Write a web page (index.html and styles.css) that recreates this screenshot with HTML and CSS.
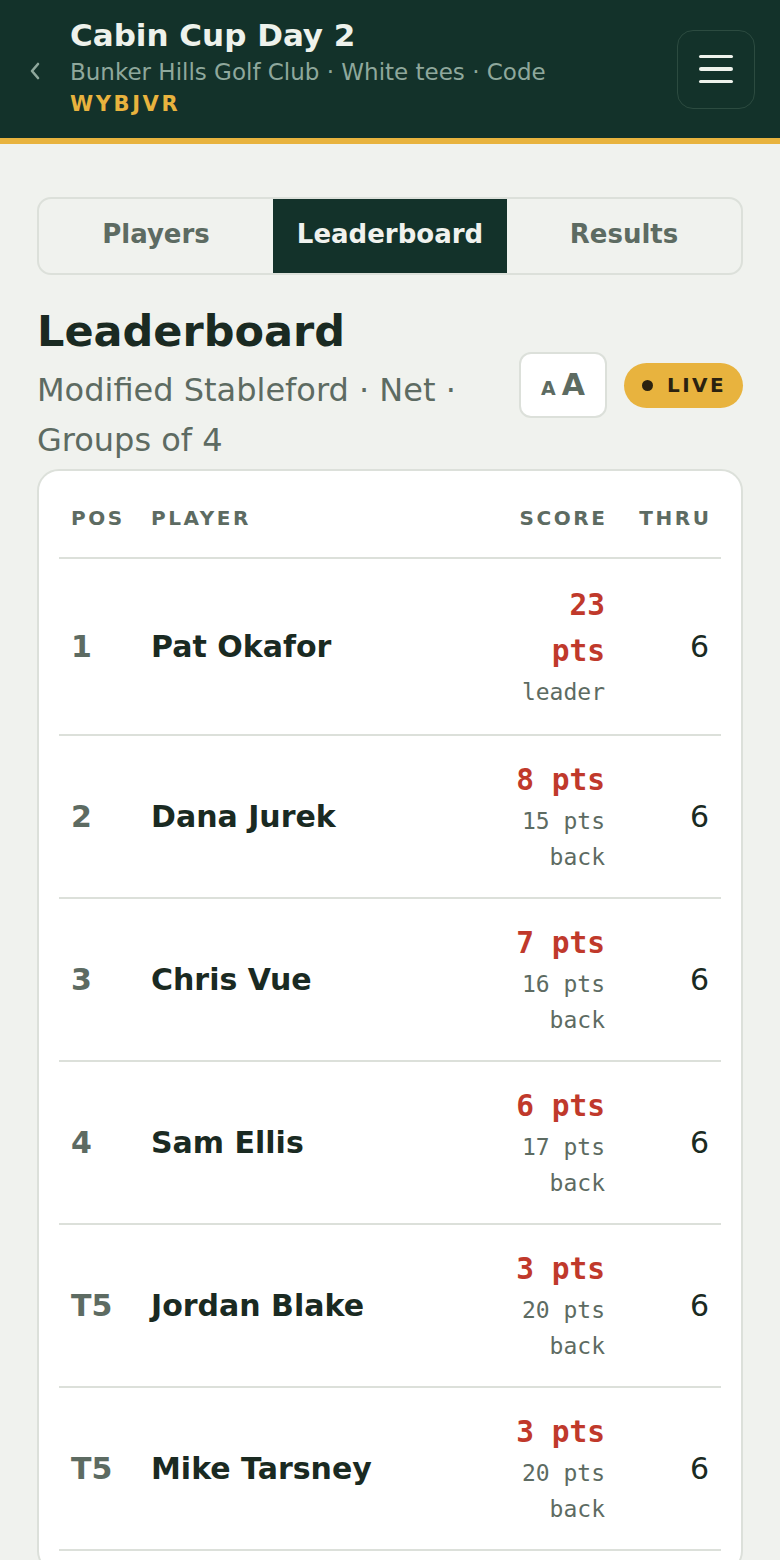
FILE: index.html
```html
<!DOCTYPE html>
<html lang="en">
<head>
<meta charset="utf-8">
<title>Cabin Cup Day 2 – Leaderboard</title>
<link rel="stylesheet" href="styles.css">
</head>
<body>
<header class="topbar">
  <button class="back" aria-label="Back">
    <svg width="14" height="20" viewBox="0 0 14 20"><path d="M10 3 L4 10 L10 17" fill="none" stroke="#8fa89c" stroke-width="2.6" stroke-linecap="round" stroke-linejoin="round"/></svg>
  </button>
  <div class="event">
    <div class="event-title">Cabin Cup Day 2</div>
    <div class="event-meta">Bunker Hills Golf Club · White tees · Code</div>
    <div class="event-code">WYBJVR</div>
  </div>
  <button class="menu" aria-label="Menu">
    <span class="bar"></span><span class="bar"></span><span class="bar"></span>
  </button>
</header>

<main class="main">
  <nav class="tabs">
    <div class="tab">Players</div>
    <div class="tab active">Leaderboard</div>
    <div class="tab">Results</div>
  </nav>

  <section class="section-head">
    <div class="section-text">
      <h1 class="section-title">Leaderboard</h1>
      <p class="section-sub">Modified Stableford · Net · Groups of 4</p>
    </div>
    <div class="controls">
      <button class="textsize"><span class="a-small">A</span><span class="a-big">A</span></button>
      <span class="live"><span class="dot"></span>LIVE</span>
    </div>
  </section>

  <div class="card">
    <div class="row head">
      <div class="cell pos">POS</div>
      <div class="cell player">PLAYER</div>
      <div class="cell score">SCORE</div>
      <div class="cell thru">THRU</div>
    </div>
    <div class="row first">
      <div class="cell pos">1</div>
      <div class="cell player">Pat Okafor</div>
      <div class="cell score"><div class="pts">23 pts</div><div class="back-by">leader</div></div>
      <div class="cell thru">6</div>
    </div>
    <div class="row">
      <div class="cell pos">2</div>
      <div class="cell player">Dana Jurek</div>
      <div class="cell score"><div class="pts">8 pts</div><div class="back-by">15 pts back</div></div>
      <div class="cell thru">6</div>
    </div>
    <div class="row">
      <div class="cell pos">3</div>
      <div class="cell player">Chris Vue</div>
      <div class="cell score"><div class="pts">7 pts</div><div class="back-by">16 pts back</div></div>
      <div class="cell thru">6</div>
    </div>
    <div class="row">
      <div class="cell pos">4</div>
      <div class="cell player">Sam Ellis</div>
      <div class="cell score"><div class="pts">6 pts</div><div class="back-by">17 pts back</div></div>
      <div class="cell thru">6</div>
    </div>
    <div class="row">
      <div class="cell pos">T5</div>
      <div class="cell player">Jordan Blake</div>
      <div class="cell score"><div class="pts">3 pts</div><div class="back-by">20 pts back</div></div>
      <div class="cell thru">6</div>
    </div>
    <div class="row">
      <div class="cell pos">T5</div>
      <div class="cell player">Mike Tarsney</div>
      <div class="cell score"><div class="pts">3 pts</div><div class="back-by">20 pts back</div></div>
      <div class="cell thru">6</div>
    </div>
  </div>
</main>
</body>
</html>
```

FILE: styles.css
```css
* { box-sizing: border-box; }

html, body {
  margin: 0;
  padding: 0;
  background: #f0f2ee;
  font-family: "DejaVu Sans", "Noto Sans", sans-serif;
  color: #1a2a22;
}

button {
  font-family: inherit;
  cursor: pointer;
}

/* Top bar */
.topbar {
  display: flex;
  align-items: center;
  background: #13322a;
  border-bottom: 6px solid #e8b33e;
  padding: 17px 25px 18px 28px;
  height: 144px;
}

.back {
  background: none;
  border: 0;
  padding: 0;
  width: 42px;
  height: 24px;
  display: flex;
  align-items: center;
  justify-content: flex-start;
  flex: none;
  margin-top: 4px;
}

.event {
  flex: 1;
  min-width: 0;
}

.event-title {
  color: #eef2ec;
  font-weight: 700;
  font-size: 31px;
  line-height: 37px;
}

.event-meta {
  color: #8fa89c;
  font-size: 23px;
  line-height: 32px;
  margin-top: 2px;
}

.event-code {
  color: #e8b33e;
  font-weight: 700;
  font-size: 21px;
  letter-spacing: 2.6px;
  line-height: 32px;
}

.menu {
  flex: none;
  width: 78px;
  height: 79px;
  border: 1.5px solid #2c4b40;
  border-radius: 16px;
  background: #13322a;
  display: flex;
  flex-direction: column;
  align-items: center;
  justify-content: center;
  gap: 9px;
  padding: 0;
  margin-top: 1px;
}

.menu .bar {
  display: block;
  width: 34px;
  height: 3.5px;
  border-radius: 2px;
  background: #eef2ec;
}

/* Main */
.main {
  padding: 53px 37px 0;
}

.tabs {
  display: grid;
  grid-template-columns: 1fr 1fr 1fr;
  border: 2px solid #dce0da;
  border-radius: 14px;
  overflow: hidden;
  height: 78px;
}

.tab {
  display: flex;
  align-items: center;
  justify-content: center;
  font-weight: 700;
  font-size: 26px;
  padding-bottom: 5px;
  color: #5d6b62;
}

.tab.active {
  background: #13322a;
  color: #f0f2ee;
}

.section-head {
  display: flex;
  align-items: center;
  gap: 20px;
  margin-top: 30px;
}

.section-text {
  flex: 1;
  min-width: 0;
}

.section-title {
  margin: 0;
  font-size: 43px;
  line-height: 52px;
  font-weight: 700;
  color: #1a2a22;
}

.section-sub {
  margin: 8px 0 0;
  font-size: 32px;
  line-height: 50px;
  color: #5d6b62;
}

.controls {
  display: flex;
  align-items: center;
  gap: 17px;
  flex: none;
}

.textsize {
  width: 88px;
  height: 66px;
  background: #ffffff;
  border: 2px solid #dce0da;
  border-radius: 12px;
  display: flex;
  align-items: baseline;
  justify-content: center;
  padding: 13px 0 0;
  gap: 6px;
  color: #5d6b62;
  font-weight: 700;
}

.a-small { font-size: 19px; }
.a-big { font-size: 30px; }

.live {
  display: inline-flex;
  align-items: center;
  height: 45px;
  padding: 0 17px 0 18px;
  border-radius: 23px;
  background: #e8b33e;
  color: #2b2210;
  font-weight: 700;
  font-size: 20px;
  letter-spacing: 2.4px;
}

.live .dot {
  width: 11px;
  height: 11px;
  border-radius: 50%;
  background: #2b2210;
  margin-right: 14px;
}

/* Card / table */
.card {
  margin-top: 4px;
  background: #ffffff;
  border: 2px solid #dce0da;
  border-radius: 22px;
  padding: 20px;
}

.row {
  display: grid;
  grid-template-columns: 80px 360px 118px 105px;
  align-items: center;
  border-bottom: 2px solid #dce0da;
}

.cell {
  padding: 21px 12px;
}

.row.first .cell {
  padding: 23px 12px;
}

.row.head .cell {
  padding: 12px 12px 24px;
  font-size: 20px;
  line-height: 30px;
  font-weight: 700;
  letter-spacing: 2.6px;
  color: #5d6b62;
}

.row.head .score,
.row.head .thru {
  margin-right: -2.6px;
}

.pos {
  font-weight: 700;
  font-size: 30px;
  color: #5d6b62;
}

.player {
  font-weight: 700;
  font-size: 30px;
  color: #1a2a22;
}

.score {
  text-align: right;
}

.thru {
  text-align: right;
  font-size: 30px;
  color: #1a2a22;
}

.row .cell.thru { padding-right: 13px; }

.pts {
  font-family: "DejaVu Sans Mono", "Liberation Mono", monospace;
  font-weight: 700;
  font-size: 29.5px;
  line-height: 46px;
  color: #c0392b;
}

.back-by {
  font-family: "DejaVu Sans Mono", "Liberation Mono", monospace;
  font-size: 23px;
  line-height: 36.5px;
  color: #5d6b62;
}
```
